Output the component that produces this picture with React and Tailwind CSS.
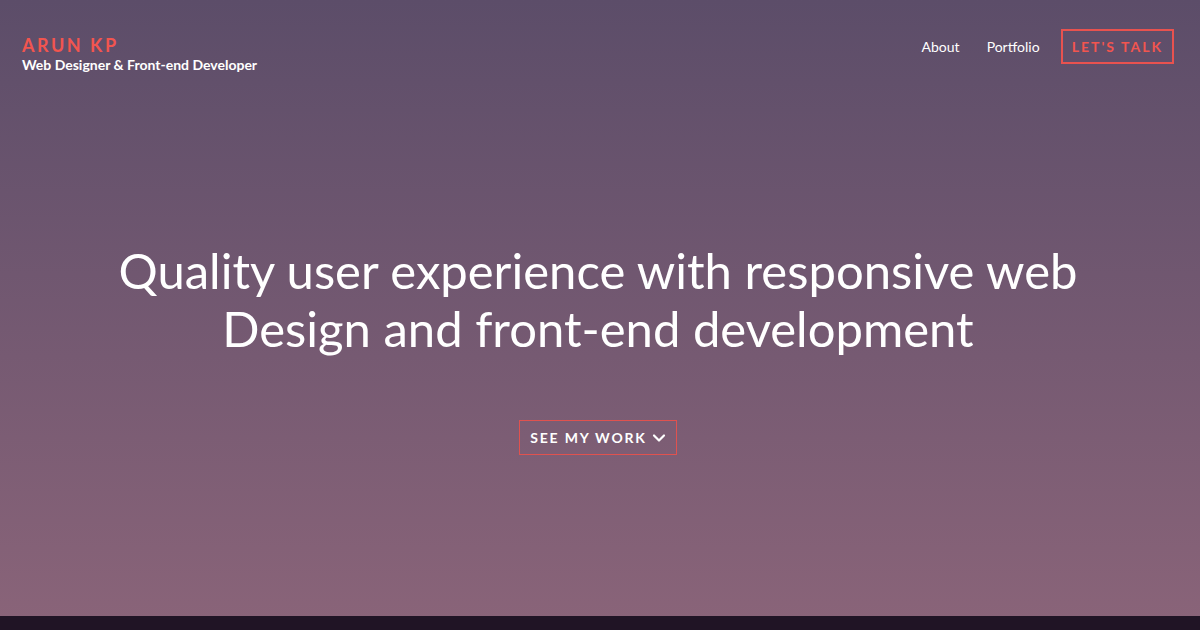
import React from "react";

export default function App() {
  return (
    <div
      className="h-[630px] w-full overflow-hidden flex flex-col bg-[linear-gradient(180deg,#5c4d69_0%,#8a6479_100%)]"
      style={{ fontFamily: "Lato, 'Open Sans', sans-serif" }}
    >
      {/* Header */}
      <header className="flex justify-between items-start px-[22px] pt-[29px]">
        <div className="pt-[7px]">
          <h1 className="text-[#f2554f] text-[18px] leading-[18px] font-bold tracking-[2.5px]">
            ARUN KP
          </h1>
          <p className="text-white text-[14px] leading-[16px] font-bold mt-[3px]">
            Web Designer &amp; Front-end Developer
          </p>
        </div>
        <nav className="flex items-center mr-[4px]">
          <a className="text-white text-[14px] mr-[27px]">About</a>
          <a className="text-white text-[14px] mr-[21px]">Portfolio</a>
          <button className="border-2 border-solid border-[#e8524f] text-[#f2554f] text-[14px] font-bold tracking-[2px] h-[35px] px-[9px] flex items-center">
            LET'S TALK
          </button>
        </nav>
      </header>

      {/* Hero */}
      <main className="flex-1 flex flex-col items-center">
        <h2 className="text-white text-[49px] leading-[58px] text-center mt-[168px] mr-[4px]">
          Quality user experience with responsive web
          <br />
          Design and front-end development
        </h2>
        <button className="mt-[63px] mr-[4px] border border-solid border-[#e0524f] text-white text-[14px] font-bold tracking-[1.8px] h-[35px] px-[10px] flex items-center gap-[5px]">
          SEE MY WORK
          <svg width="14" height="14" viewBox="0 0 14 14" fill="none" stroke="white" strokeWidth="2.2" strokeLinecap="round" strokeLinejoin="round">
            <path d="M2 4.5l5 5 5-5" />
          </svg>
        </button>
      </main>

      <div className="h-[14px] bg-[#201425]" />
    </div>
  );
}
